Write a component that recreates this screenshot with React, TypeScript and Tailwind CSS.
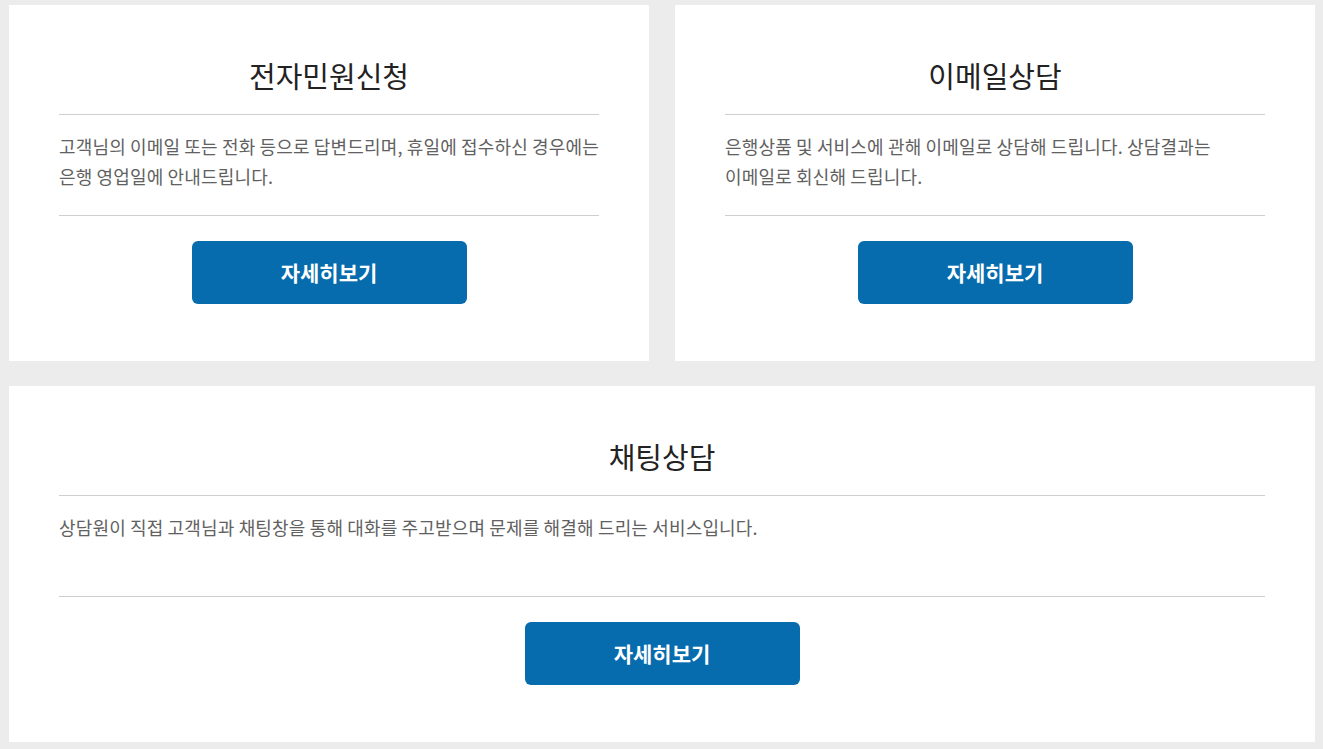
import React from "react";

type CardProps = {
  title: string;
  lines: string[];
  className?: string;
};

function Card({ title, lines, className = "" }: CardProps) {
  return (
    <div className={`bg-white px-[50px] pt-[50px] pb-[57px] flex flex-col ${className}`}>
      <h2 className="text-center text-[29px] leading-[40px] text-[#222] font-normal mb-[19px]">
        {title}
      </h2>
      <div className="border-t border-b border-[#cfcfcf] pt-[16px] pb-[24px]">
        <p className="text-[18px] leading-[30px] text-[#616161] min-h-[60px] tracking-[0.15px] whitespace-nowrap">
          {lines.map((l, i) => (
            <React.Fragment key={i}>
              {l}
              {i < lines.length - 1 && <br />}
            </React.Fragment>
          ))}
        </p>
      </div>
      <div className="flex justify-center pt-[25px]">
        <button className="w-[275px] h-[63px] rounded-[6px] bg-[#066cad] text-white text-[21px] font-bold">
          자세히보기
        </button>
      </div>
    </div>
  );
}

export default function App() {
  return (
    <div
      className="min-h-[749px] bg-[#ececec] pl-[9px] pr-[8px] pt-[5px] pb-[7px] flex flex-col gap-[25px]"
      style={{ fontFamily: '"Noto Sans CJK KR", "Noto Sans", sans-serif' }}
    >
      <div className="grid grid-cols-2 gap-[26px]">
        <Card
          title="전자민원신청"
          lines={[
            "고객님의 이메일 또는 전화 등으로 답변드리며, 휴일에 접수하신 경우에는",
            "은행 영업일에 안내드립니다.",
          ]}
        />
        <Card
          title="이메일상담"
          lines={[
            "은행상품 및 서비스에 관해 이메일로 상담해 드립니다. 상담결과는",
            "이메일로 회신해 드립니다.",
          ]}
        />
      </div>
      <Card
        title="채팅상담"
        lines={["상담원이 직접 고객님과 채팅창을 통해 대화를 주고받으며 문제를 해결해 드리는 서비스입니다."]}
      />
    </div>
  );
}
